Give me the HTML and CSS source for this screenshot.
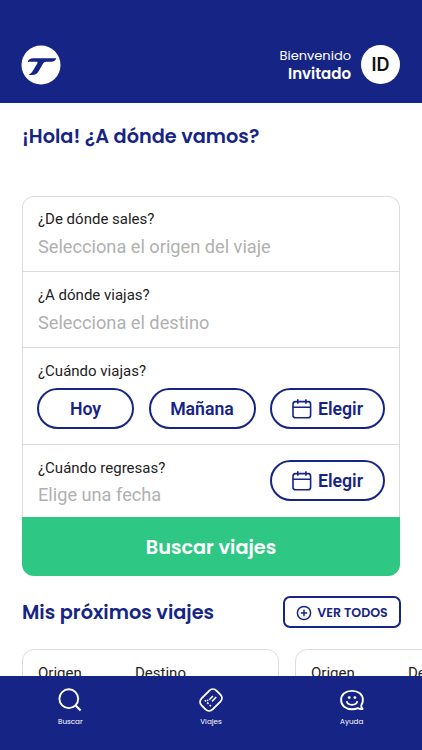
FILE: index.html
```html
<!DOCTYPE html>
<html lang="es">
<head>
<meta charset="utf-8">
<title>Viajes</title>
<link rel="stylesheet" href="styles.css">
</head>
<body>
<div class="app">
  <header class="header">
    <svg class="logo" viewBox="0 0 40 40"><circle cx="20" cy="20" r="19.5" fill="#fff"/><path d="M6.7 17.2C7.4 14.4 9.2 13.3 12.2 13.3H35.3C34.5 15.7 33.1 16.7 30.4 16.7H25.2C23.5 16.7 22.7 17.4 21.8 19L17.8 26C16.3 28.7 14.3 30 11 30H7.5C9.7 28.9 10.8 27.5 12.3 25L16.1 18.8C17.2 17 16.6 16.7 14.7 16.7H9.6C8.3 16.7 7.5 16.8 6.7 17.2Z" fill="#162585"/></svg>
    <div class="user">
      <div class="welcome"><span class="hello">Bienvenido</span><strong class="guest">Invitado</strong></div>
      <div class="avatar">ID</div>
    </div>
  </header>
  <main class="main">
    <h1 class="title">¡Hola! ¿A dónde vamos?</h1>
    <section class="search">
      <div class="field"><span class="label">¿De dónde sales?</span><span class="hint">Selecciona el origen del viaje</span></div>
      <div class="field"><span class="label">¿A dónde viajas?</span><span class="hint">Selecciona el destino</span></div>
      <div class="field when">
        <span class="label">¿Cuándo viajas?</span>
        <div class="pills">
          <button class="pill today">Hoy</button>
          <button class="pill tomorrow">Mañana</button>
          <button class="pill choose"><svg class="calendar" viewBox="0 0 20 20"><rect x="1" y="2.6" width="17.6" height="16.2" rx="2.6"/><path d="M1 8.3H18.6M5.8 .2V4.8M13.9 .2V4.8"/></svg><span>Elegir</span></button>
        </div>
      </div>
      <div class="field return">
        <div class="return-text"><span class="label">¿Cuándo regresas?</span><span class="hint">Elige una fecha</span></div>
        <button class="pill choose"><svg class="calendar" viewBox="0 0 20 20"><rect x="1" y="2.6" width="17.6" height="16.2" rx="2.6"/><path d="M1 8.3H18.6M5.8 .2V4.8M13.9 .2V4.8"/></svg><span>Elegir</span></button>
      </div>
      <button class="submit">Buscar viajes</button>
    </section>
    <div class="trips-head">
      <h2 class="subtitle">Mis próximos viajes</h2>
      <button class="see-all"><svg class="plus" viewBox="0 0 16 16"><circle cx="8" cy="8" r="6.6"/><path d="M4.8 8H11.2M8 4.8V11.2"/></svg><span>VER TODOS</span></button>
    </div>
    <div class="trips">
      <article class="trip"><span>Origen</span><span>Destino</span></article>
      <article class="trip"><span>Origen</span><span>Destino</span></article>
    </div>
  </main>
  <nav class="nav">
    <a class="tab"><svg class="tab-icon" viewBox="0 0 24 24"><circle cx="10.8" cy="10.7" r="9.4" stroke-width="1.9"/><path d="M17.4 17.3L22.6 22.5" stroke-width="2.2"/></svg><span>Buscar</span></a>
    <a class="tab"><svg class="tab-icon" viewBox="0 0 24 24"><rect x="4.2" y="1.5" width="15.6" height="21" rx="5" transform="rotate(45 12 12)"/><path d="M10.3 11.8L13.9 7.9M13 13.6L17.2 9" stroke-width="1.5"/><path d="M5.8 12.2L7.1 13.5M8.2 14.6L9.5 15.9M10.6 17L11.9 18.3M8.2 11.9L9.2 12.9" stroke-width="1.5"/></svg><span>Viajes</span></a>
    <a class="tab"><svg class="tab-icon" viewBox="0 0 24 24"><path d="M21.3 17.2C22.4 15.6 22.9 14 22.9 12C22.9 6.2 18.3 2.9 12 2.9S1.1 6.2 1.1 12S5.7 21.3 12 21.3C14.2 21.3 16.2 20.9 17.8 20.1C19.2 20.9 20.8 21.3 22.6 21C21.5 20 21 18.8 21.3 17.2Z"/><path d="M6.7 13.2C7.5 18 16.5 18 17.3 13.2" stroke-width="1.7"/><circle cx="9.2" cy="9.6" r="1.4" class="eye"/><circle cx="14.9" cy="9.6" r="1.4" class="eye"/></svg><span>Ayuda</span></a>
  </nav>
</div>
</body>
</html>
```
FILE: styles.css
```css
* { box-sizing: border-box; }
body { margin: 0; background: #fff; color: #222; font-family: Roboto, sans-serif; }
button { font: inherit; margin: 0; padding: 0; cursor: pointer; }
.app { width: 422px; height: 750px; display: flex; flex-direction: column; overflow: hidden; }
.header { height: 103px; flex: none; background: #162585; padding: 26px 22px 0 21px; display: flex; align-items: center; justify-content: space-between; color: #fff; font-family: Poppins, Inter, sans-serif; }
.logo { width: 40px; height: 40px; }
.user { display: flex; align-items: center; gap: 10px; }
.welcome { display: flex; flex-direction: column; align-items: flex-end; white-space: nowrap; }
.hello { font-size: 13px; line-height: 18px; }
.guest { font-size: 15px; line-height: 18px; font-weight: 600; }
.avatar { width: 39px; height: 39px; border-radius: 50%; background: #fff; color: #111; display: flex; align-items: center; justify-content: center; font: 600 18px/24px Inter, sans-serif; }
.main { flex: 1; min-height: 0; overflow: hidden; padding: 0 22px; }
.title, .subtitle { margin: 0; color: #162585; font: 600 19.3px/30px Poppins, Inter, sans-serif; white-space: nowrap; }
.title { height: 93px; padding-top: 19px; }
.search { width: 378px; height: 380px; border: 1px solid #dcdcdc; border-bottom: 0; border-radius: 12px; background: #fff; display: flex; flex-direction: column; }
.field { height: 76px; flex: none; border-bottom: 1px solid #dcdcdc; padding: 13px 14px 0 15px; display: flex; flex-direction: column; }
.field:first-child { height: 75px; padding-top: 12px; }
.label { font-size: 15px; line-height: 20px; white-space: nowrap; }
.hint { font-size: 18.2px; line-height: 24px; margin-top: 6px; color: #b0b0b0; white-space: nowrap; }
.field.when { height: 97px; padding-left: 14px; }
.when .label { padding-left: 1px; }
.pills { display: flex; justify-content: space-between; margin-top: 7px; }
.pill { height: 41px; border: 2px solid #162585; border-radius: 21px; background: #fff; color: #162585; font-size: 17.7px; font-weight: 600; display: flex; align-items: center; justify-content: center; }
.today { width: 97px; }
.tomorrow { width: 107px; }
.choose { width: 115px; gap: 6px; }
.calendar { width: 20px; height: 20px; fill: none; stroke: #162585; stroke-width: 1.6; }
.field.return { height: 72px; flex-direction: row; justify-content: space-between; border: 0; }
.return-text { display: flex; flex-direction: column; }
.return .hint { margin-top: 5px; }
.return .pill { margin-top: 2px; }
.submit { width: 378px; height: 59px; flex: none; margin-left: -1px; border: 0; border-radius: 0 0 12px 12px; background: #2ec783; color: #fff; font: 600 19.3px/30px Poppins, Inter, sans-serif; padding-top: 2px; }
.trips-head { display: flex; justify-content: space-between; width: 379px; margin-top: 20px; height: 32px; }
.subtitle { line-height: 34px; }
.see-all { width: 118px; height: 32px; border: 2px solid #162585; border-radius: 7px; background: #fff; color: #162585; display: flex; align-items: center; justify-content: center; gap: 5px; font: 600 12.6px/20px Poppins, Inter, sans-serif; white-space: nowrap; padding-top: 1px; }
.plus { width: 16px; height: 16px; fill: none; stroke: #162585; stroke-width: 1.5; }
.trips { display: flex; gap: 16px; width: 530px; margin-top: 21px; }
.trip { width: 257px; height: 110px; flex: none; border: 1px solid #dcdcdc; border-radius: 12px; padding: 13px 15px; display: grid; grid-template-columns: 97px 1fr; font-size: 15px; line-height: 20px; }
.nav { height: 74px; flex: none; background: #162585; color: #fff; display: grid; grid-template-columns: repeat(3, 1fr); padding-top: 12px; }
.tab { display: flex; flex-direction: column; align-items: center; font: 400 7.2px/12px Poppins, Inter, sans-serif; gap: 4px; }
.tab-icon { width: 24px; height: 24px; fill: none; stroke: #fff; stroke-width: 1.9; stroke-linejoin: round; }
.eye { fill: #fff; stroke: none; }
```
